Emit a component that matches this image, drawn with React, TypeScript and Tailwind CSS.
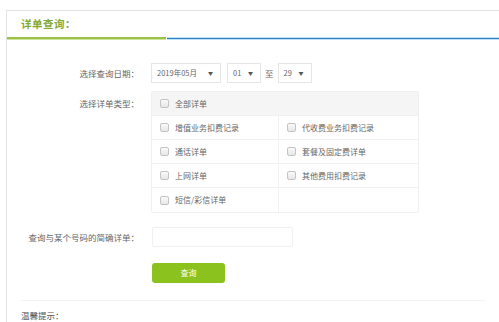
import React from 'react';

const font = "font-['Noto_Sans_CJK_SC','Noto_Sans',sans-serif]";

function Check({ label }: { label: string }) {
  return (
    <div className="flex items-center gap-[6px] pl-[8px] h-full">
      <span className="w-[9px] h-[9px] rounded-[2px] border border-[#c4c4c4] bg-gradient-to-b from-[#fafafa] to-[#e6e6e6]" />
      <span className="text-[8px] text-[#666]">{label}</span>
    </div>
  );
}

function Select({ value, w }: { value: string; w: string }) {
  return (
    <div className={`${w} h-[20px] border border-[#e6e6e6] flex items-center justify-between pl-[5px] pr-[7px] bg-white`}>
      <span className="text-[7.5px] text-[#666]">{value}</span>
      <span className="text-[5px] text-[#555]">▼</span>
    </div>
  );
}

export default function App() {
  const rows: [string, string][] = [
    ['增值业务扣费记录', '代收费业务扣费记录'],
    ['通话详单', '套餐及固定费详单'],
    ['上网详单', '其他费用扣费记录'],
    ['短信/彩信详单', ''],
  ];

  return (
    <div className={`w-[499px] h-[322px] bg-white overflow-hidden pt-[10px] pl-[6px] ${font}`}>
      <div className="border-t border-l border-[#e3e3e3] h-[320px]">
        {/* Heading */}
        <div className="h-[26px] flex items-center pl-[14px]">
          <span className="text-[10.5px] font-bold text-[#84a935] tracking-[0.5px]">详单查询：</span>
        </div>
        <div className="flex h-[3px]">
          <div className="w-[159px] bg-[#9cc144] border-b border-[#cfe3a0]" />
          <div className="w-[1px]" />
          <div className="flex-1 bg-[#2f7fc4] border-y border-[#bfe4f7]" />
        </div>

        {/* Date */}
        <div className="flex items-center mt-[23px] h-[20px]">
          <div className="w-[132px] text-right text-[8.5px] text-[#666]">选择查询日期：</div>
          <div className="ml-[12px] flex items-center">
            <Select value="2019年05月" w="w-[70px]" />
            <div className="w-[6px]" />
            <Select value="01" w="w-[34px]" />
            <span className="text-[8.5px] text-[#666] mx-[4px]">至</span>
            <Select value="29" w="w-[34px]" />
          </div>
        </div>

        {/* Types */}
        <div className="flex mt-[8px]">
          <div className="w-[132px] text-right text-[8.5px] text-[#666] h-[24px] flex items-center justify-end">选择详单类型：</div>
          <div className="ml-[12px] w-[268px] border border-[#f0f0f0] rounded-[2px] overflow-hidden">
            <div className="h-[24px] bg-[#f5f5f5] border-b border-[#f0f0f0]">
              <Check label="全部详单" />
            </div>
            {rows.map((r, i) => (
              <div key={i} className={`grid grid-cols-[127px_1fr] h-[24px] ${i < rows.length - 1 ? 'border-b border-[#f0f0f0]' : ''}`}>
                <div className="border-r border-[#f0f0f0]">
                  <Check label={r[0]} />
                </div>
                <div>{r[1] && <Check label={r[1]} />}</div>
              </div>
            ))}
          </div>
        </div>

        {/* Number */}
        <div className="flex items-center mt-[14px]">
          <div className="w-[132px] text-right text-[8.5px] text-[#666]">查询与某个号码的简确详单：</div>
          <div className="ml-[13px] w-[141px] h-[20px] border border-[#f0f0f0] rounded-[2px]" />
        </div>

        {/* Button */}
        <div className="flex mt-[16px] pl-[145px]">
          <button className="w-[73px] h-[20px] rounded-[3px] bg-[#8cc21e] text-white text-[8px]">查询</button>
        </div>

        <div className="mt-[17px] ml-[14px] mr-[14px] border-t border-[#f3f3f3]" />
        <div className="mt-[8px] pl-[14px] text-[8.5px] text-[#555]">温馨提示：</div>
      </div>
    </div>
  );
}
